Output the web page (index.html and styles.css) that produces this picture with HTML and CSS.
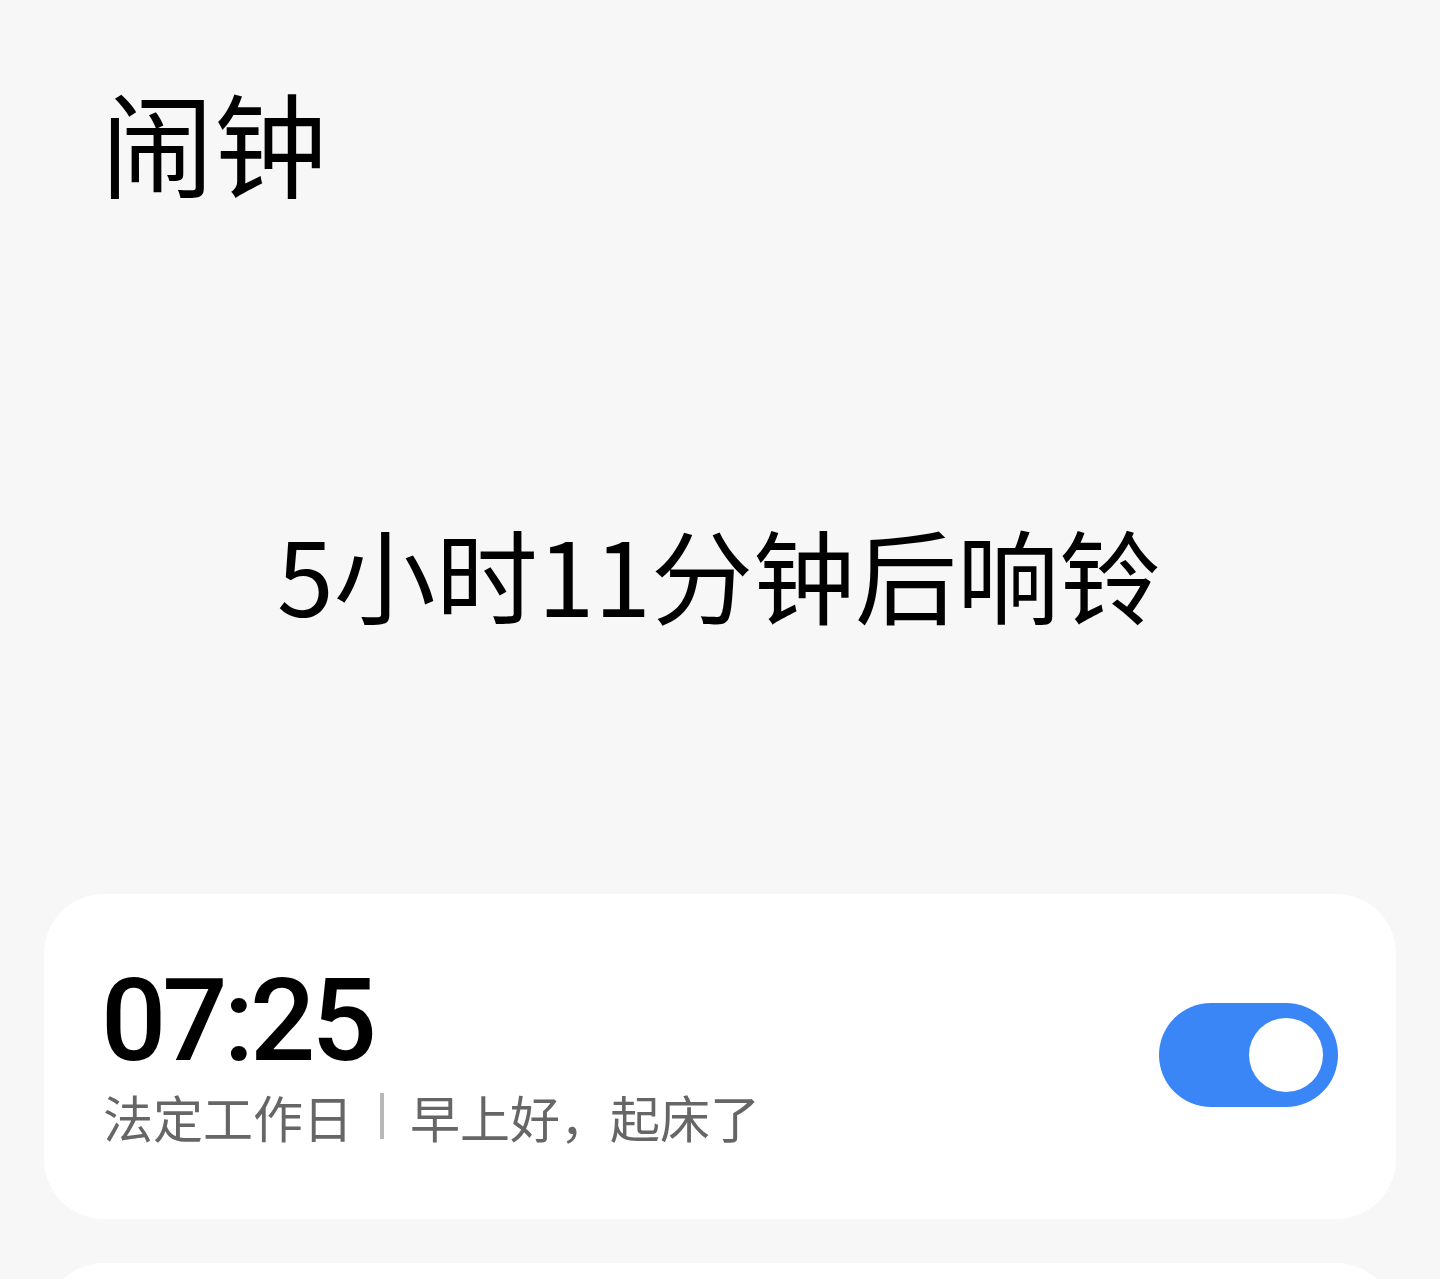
FILE: index.html
```html
<!DOCTYPE html>
<html lang="zh-CN">
<head>
<meta charset="utf-8">
<title>闹钟</title>
<link rel="stylesheet" href="styles.css">
</head>
<body>
<div class="page">
  <h1 class="title">闹钟</h1>
  <div class="countdown">5小时11分钟后响铃</div>
  <div class="list">
    <div class="card">
      <div class="info">
        <div class="time">07:25</div>
        <div class="desc"><span>法定工作日</span><span class="sep"></span><span>早上好，起床了</span></div>
      </div>
      <div class="switch on"><div class="knob"></div></div>
    </div>
    <div class="card next"></div>
  </div>
</div>
</body>
</html>
```

FILE: styles.css
```css
html, body {
  margin: 0;
  padding: 0;
  background: #f7f7f7;
}
body {
  font-family: "Noto Sans CJK SC", "Noto Sans", sans-serif;
  color: #000;
  overflow: hidden;
  height: 1279px;
}
.page {
  display: flex;
  flex-direction: column;
}
.title {
  margin: 0;
  padding: 84px 0 0 101px;
  font-size: 113px;
  font-weight: 400;
  line-height: 1;
}
.countdown {
  margin-top: 325px;
  text-align: center;
  font-size: 102px;
  line-height: 1;
  font-weight: 400;
  padding-right: 2px;
}
.list {
  margin-top: 270px;
  padding: 0 44px;
  display: flex;
  flex-direction: column;
  gap: 44px;
}
.card {
  background: #fff;
  border-radius: 60px;
  height: 325px;
  box-sizing: border-box;
  padding: 69px 58px 0 61px;
  display: flex;
  align-items: flex-start;
  justify-content: space-between;
}
.card.next {
  height: 200px;
}
.info {
  display: flex;
  flex-direction: column;
}
.time {
  font-family: Roboto, "Noto Sans", sans-serif;
  font-weight: 500;
  font-size: 115px;
  line-height: 1;
  letter-spacing: -4px;
  margin-left: -4px;
}
.desc {
  margin-top: 13px;
  display: flex;
  align-items: center;
  font-size: 50px;
  line-height: 1;
  color: #666;
  margin-left: -2px;
}
.sep {
  display: inline-block;
  width: 4px;
  height: 46px;
  background: #b8b8b8;
  margin: 0 26px 0 27px;
}
.switch {
  margin-top: 40px;
  width: 179px;
  height: 104px;
  border-radius: 52px;
  background: #3b86f7;
  display: flex;
  align-items: center;
  justify-content: flex-end;
  padding-right: 15px;
  box-sizing: border-box;
}
.knob {
  width: 74px;
  height: 74px;
  border-radius: 50%;
  background: #fff;
}
```
